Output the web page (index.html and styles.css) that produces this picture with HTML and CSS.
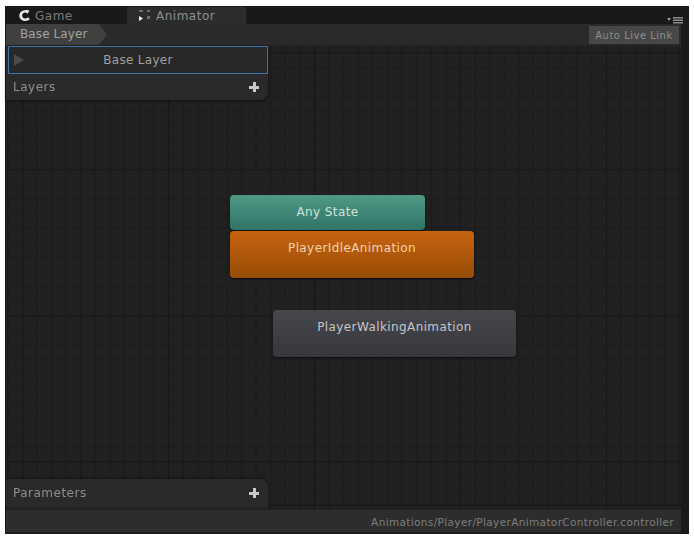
FILE: index.html
```html
<!DOCTYPE html>
<html>
    <head lang="en">
        <meta charset="UTF-8">
        <title>Animator</title>
        <link rel="stylesheet" href="styles.css">
    </head>
    <body>
        <div id="window">
            <div id="inner">
                <div id="tabs">
                    <div class="tab">
                        <svg class="tab-icon" width="12" height="12" viewBox="0 0 12 12">
                            <path d="M10.5 0.5 L8.6 3.8 A3 3 0 1 0 8.6 7.2 L11 9 A6 6 0 0 1 5.5 11 A5.3 5.3 0 0 1 0.3 5.5 A5.3 5.3 0 0 1 5.5 0.3 A8 8 0 0 1 10.5 0.5 Z" fill="#e6e6e6"/>
                        </svg>
                        <span>Game</span>
                    </div>
                    <div class="tab active">
                        <svg class="tab-icon" width="12" height="13" viewBox="0 0 12 13">
                            <path d="M0 1h4v2H0zM8 1h3v2H8zM8 7h3v3H8z" fill="#6e6e6e"/>
                            <path d="M0 7l4 2.5L0 12z" fill="#f0f0f0"/>
                        </svg>
                        <span>Animator</span>
                    </div>
                    <svg id="menu" width="16" height="8" viewBox="0 0 16 8">
                        <path d="M0 2h4L2 5z" fill="#999"/>
                        <path d="M6 1h10v1.5H6zM6 3.5h10V5H6zM6 6h10v1.5H6z" fill="#8c8c8c"/>
                    </svg>
                </div>
                <div id="crumbs">
                    <div id="crumb">Base Layer</div>
                    <div id="live">Auto Live Link</div>
                </div>
                <div id="canvas">
                    <div class="panel layers">
                        <div id="layer-row">
                            <span id="layer-arrow"></span>
                            <span id="layer-name">Base Layer</span>
                        </div>
                        <div class="panel-head">
                            <span>Layers</span>
                            <span class="plus"></span>
                        </div>
                    </div>
                    <div class="panel params">
                        <div class="panel-head">
                            <span>Parameters</span>
                            <span class="plus"></span>
                        </div>
                    </div>
                    <div class="node any">Any State</div>
                    <div class="node idle">PlayerIdleAnimation</div>
                    <div class="node walking">PlayerWalkingAnimation</div>
                </div>
                <div id="status">Animations/Player/PlayerAnimatorController.controller</div>
            </div>
        </div>
    </body>
</html>
```

FILE: styles.css
```css
*{
    margin:0;
    padding:0;
    box-sizing:border-box;
}
html,body{
    height:100%;
    background-color:#fff;
}
body{
    padding:6px 5px 4px 5px;
    font-family:"DejaVu Sans","Liberation Sans",sans-serif;
    font-size:12px;
}
#window{
    height:100%;
    padding:1px 8px 0 1px;
    background-color:#1a1a1a;
    filter:blur(.5px);
}
#inner{
    height:100%;
    display:flex;
    flex-direction:column;
}
#tabs{
    height:17px;
    display:flex;
    align-items:stretch;
    background-color:#191919;
    position:relative;
    flex:none;
}
.tab{
    width:122px;
    display:flex;
    align-items:center;
    gap:4px;
    padding-left:13px;
    color:#7c7c7c;
    letter-spacing:.5px;
}
.tab.active{
    width:119px;
    margin-left:-1px;
    background-color:#2c2c2c;
    color:#8f8f8f;
    padding-left:12px;
    gap:5px;
}
.tab-icon{
    flex:none;
}
#menu{
    position:absolute;
    right:-2px;
    bottom:0;
}
#crumbs{
    height:22px;
    flex:none;
    display:flex;
    justify-content:space-between;
    background-color:#2a2a2a;
    border-bottom:1px solid #222;
}
#crumb{
    width:101px;
    padding-left:14px;
    line-height:21px;
    color:#a2a2a2;
    letter-spacing:.1px;
    background-color:#404040;
    clip-path:polygon(0 0,92% 0,100% 50%,92% 100%,0 100%);
}
#live{
    width:90px;
    margin:2px 2px 1px 0;
    background-color:#474747;
    color:#8e8e8e;
    font-size:10px;
    letter-spacing:.5px;
    line-height:19px;
    text-align:center;
}
#canvas{
    flex:1;
    position:relative;
    background-color:#212121;
    background-image:
        linear-gradient(#191919,#191919),
        linear-gradient(#191919,#191919),
        linear-gradient(90deg,#171717 1px,transparent 1px),
        linear-gradient(#181818 1px,transparent 1px),
        linear-gradient(90deg,#1d1d1d 2px,transparent 2px),
        linear-gradient(#1e1e1e 2px,transparent 2px);
    background-size:100% 1px,100% 1px,146px 146px,146px 146px,14.6px 14.6px,14.6px 14.6px;
    background-position:0 6px,0 459px,16px 123px,16px 123px,1px 6px,1px 6px;
    background-repeat:no-repeat,no-repeat,repeat,repeat,repeat,repeat;
}
.panel{
    position:absolute;
    left:0;
    width:262px;
    background-color:#2a2a2a;
}
.layers{
    top:0;
    border-bottom-right-radius:8px;
    box-shadow:0 1px 3px rgba(0,0,0,.6);
}
.params{
    bottom:0;
    height:31px;
    border-top-right-radius:8px;
    border-bottom:3px solid #222;
    box-shadow:0 -1px 2px rgba(0,0,0,.4);
}
#layer-row{
    height:28px;
    margin-left:2px;
    display:flex;
    align-items:center;
    justify-content:center;
    position:relative;
    background-color:#282828;
    border:1px solid #3a74a8;
    color:#a0a0a0;
    letter-spacing:.3px;
}
#layer-arrow{
    position:absolute;
    left:5px;
    top:7px;
    border-left:10px solid #4c4c4c;
    border-top:6px solid transparent;
    border-bottom:6px solid transparent;
}
.panel-head{
    height:26px;
    display:flex;
    align-items:center;
    justify-content:space-between;
    padding:0 9px 0 7px;
    color:#8f8f8f;
    letter-spacing:.5px;
}
.params .panel-head{
    height:28px;
}
.plus{
    width:10px;
    height:10px;
    background-image:
        linear-gradient(#c8c8c8,#c8c8c8),
        linear-gradient(#c8c8c8,#c8c8c8);
    background-size:10px 3px,3px 10px;
    background-position:center;
    background-repeat:no-repeat;
}
.node{
    position:absolute;
    border-radius:4px;
    text-align:center;
    box-shadow:0 1px 2px rgba(0,0,0,.7);
    letter-spacing:.4px;
}
.any{
    left:224px;
    top:149px;
    width:195px;
    height:35px;
    line-height:34px;
    color:#cfe3dc;
    background:linear-gradient(#4f9a85,#2f7466);
}
.idle{
    left:224px;
    top:185px;
    width:244px;
    height:47px;
    line-height:34px;
    color:#f0d3ae;
    background:linear-gradient(#c9630f,#964c06);
}
.walking{
    left:267px;
    top:264px;
    width:243px;
    height:47px;
    line-height:34px;
    color:#c4c6cb;
    background:linear-gradient(#45474d,#36383c);
}
#status{
    height:24px;
    flex:none;
    background-color:#2d2d2d;
    border-bottom:2px solid #1e1e1e;
    color:#7e7e7e;
    font-size:10.5px;
    letter-spacing:.36px;
    line-height:25px;
    text-align:right;
    padding-right:7px;
}
```
